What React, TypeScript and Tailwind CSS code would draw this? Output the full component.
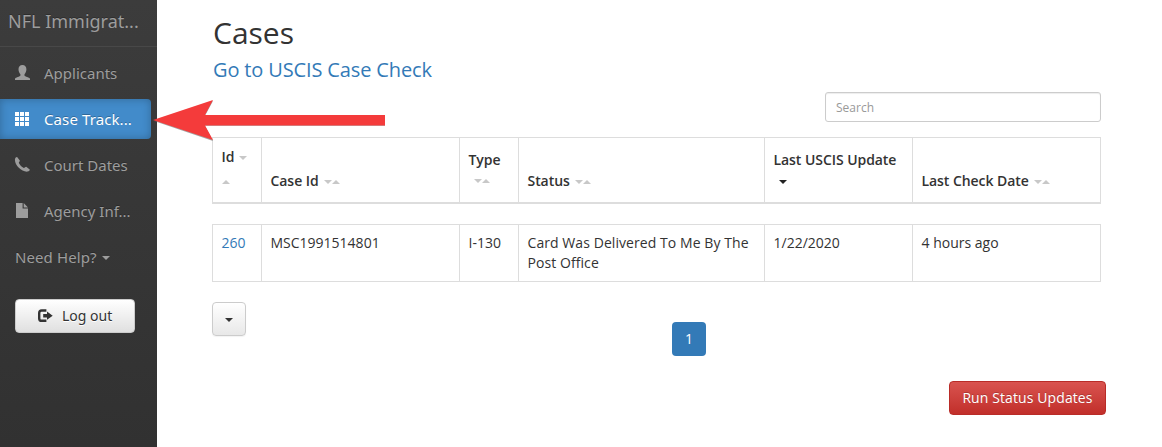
import type { ReactNode } from 'react';

const UserIcon = () => (
  <svg className="block h-[16px] w-[16px]" viewBox="0 0 16 16" fill="currentColor">
    <path d="M8.4 0C11 0 12.4 1.7 12.4 4.3C12.4 6.4 11.6 8.2 10.5 9.2V10.4C10.7 11.5 15.7 12.2 16 13.8V15H1V13.8C1.3 12.2 6.2 11.5 6.4 10.4V9.2C5.3 8.2 4.5 6.4 4.5 4.3C4.5 1.7 5.9 0 8.4 0Z" />
  </svg>
);

const GridIcon = () => (
  <svg className="block h-[16px] w-[16px]" viewBox="0 0 16 16" fill="currentColor">
    <path d="M1 1h4v4H1zM6 1h4v4H6zM11 1h4v4h-4zM1 6h4v4H1zM6 6h4v4H6zM11 6h4v4h-4zM1 11h4v4H1zM6 11h4v4H6zM11 11h4v4h-4z" />
  </svg>
);

const PhoneIcon = () => (
  <svg className="block h-[16px] w-[16px]" viewBox="0 0 16 16" fill="currentColor">
    <path d="M1 2C1.3 0.8 2.4 -0.2 3.1 0.1L5.8 3.6C6.2 4.3 4.6 5.3 4.9 6C5.9 8.1 7.7 10 9.8 10.9C10.5 11.2 11.6 9.5 12.2 9.8L15.7 12.4C16.1 13.1 14.9 14.4 13.6 14.6C10.5 14.9 7.3 13.3 4.8 10.8C2.2 8.1 0.6 4.9 1 2Z" />
  </svg>
);

const FileIcon = () => (
  <svg className="block h-[16px] w-[16px]" viewBox="0 0 16 16" fill="currentColor">
    <path d="M2 0H8.6V5.6H14V15H2ZM9.7 0L14 4.5H9.7Z" />
  </svg>
);

const LogOutIcon = () => (
  <svg className="block h-[16px] w-[16px]" viewBox="0 0 16 16">
    <path d="M9.4 2.5H4.6Q2.2 2.5 2.2 4.9V10.4Q2.2 12.8 4.6 12.8H9.4" fill="none" stroke="currentColor" strokeWidth="2.4" />
    <path d="M6.2 6H10V3.6L15.7 7.7L10 11.8V9.4H6.2Z" fill="currentColor" />
  </svg>
);

const Down = ({ className = 'text-[#c8c8c8]' }: { className?: string }) => (
  <svg className={`inline-block h-[4px] w-[8px] align-middle ${className}`} viewBox="0 0 8 4" fill="currentColor">
    <path d="M0 0H8L4 4Z" />
  </svg>
);

const Up = () => (
  <svg className="inline-block h-[4px] w-[8px] align-middle text-[#c8c8c8]" viewBox="0 0 8 4" fill="currentColor">
    <path d="M0 4H8L4 0Z" />
  </svg>
);

const Sort = () => (
  <span className="ml-[5px] flex h-[22px] items-center">
    <Down />
    <Up />
  </span>
);

function NavItem({ icon, label, active = false }: { icon: ReactNode; label: string; active?: boolean }) {
  return (
    <a
      className={
        active
          ? 'flex h-[40px] w-[151px] items-center rounded-r-[4px] bg-[#428bca] pl-[14px] text-white shadow-[inset_0_0_8px_rgba(0,0,0,0.25)]'
          : 'flex h-[40px] w-[151px] items-center pl-[14px]'
      }
    >
      {icon}
      <span className={active ? 'ml-[14px] whitespace-nowrap tracking-[0.1px]' : 'ml-[14px] whitespace-nowrap'}>{label}</span>
    </a>
  );
}

const cols = 'grid grid-cols-[49px_198px_59px_246px_148px_189px]';

export default function App() {
  return (
    <div className="relative flex h-[447px] w-[1162px] overflow-hidden bg-white font-['Open_Sans',sans-serif] text-[14px] leading-[20px] text-[#333]">
      <aside className="h-full w-[157px] shrink-0 bg-linear-to-b from-[#3c3c3c] to-[#313131] font-['Noto_Sans',sans-serif] text-[15px] text-[#9d9d9d] [text-shadow:0_-1px_0_rgba(0,0,0,0.25)]">
        <div className="flex h-[47px] items-center border-b border-[#484848] pb-[4px] pl-[8px] text-[18px]">
          <span>NFL Immigrat...</span>
        </div>
        <nav className="flex flex-col gap-[6px] pt-[6px]">
          <NavItem icon={<UserIcon />} label="Applicants" />
          <NavItem icon={<GridIcon />} label="Case Track..." active />
          <NavItem icon={<PhoneIcon />} label="Court Dates" />
          <NavItem icon={<FileIcon />} label="Agency Inf..." />
          <a className="flex h-[40px] items-center pl-[15px]">
            <span className="tracking-[0.1px]">Need Help?</span>
            <Down className="ml-[5px] mt-[2px] text-[#9d9d9d]" />
          </a>
        </nav>
        <button className="ml-[15px] mt-[22px] flex h-[34px] w-[120px] items-center rounded-[4px] border border-[#ccc] bg-linear-to-b from-white to-[#e0e0e0] pl-[21px] text-[14px] text-[#333] [text-shadow:0_1px_0_#fff]">
          <LogOutIcon />
          <span className="ml-[9px]">Log out</span>
        </button>
      </aside>

      <main className="ml-[55px] w-[894px]">
        <h1 className="pl-px pt-[16px] text-[30px] leading-[33px]">Cases</h1>
        <h2 className="mt-[9px] pl-px text-[20px] leading-[24px] tracking-[-0.14px] text-[#337ab7]">Go to USCIS Case Check</h2>
        <div className="mt-[10px] flex w-[889px] justify-end">
          <input
            placeholder="Search"
            className="h-[30px] w-[276px] rounded-[3px] border border-[#ccc] px-[10px] text-[12px] shadow-[inset_0_1px_1px_rgba(0,0,0,0.075)] placeholder:text-[#999]"
          />
        </div>

        <div className="mt-[15px] w-[889px]">
          <div className={`${cols} h-[67px] border-t border-b-2 border-r border-[#ddd] font-semibold tracking-[-0.06px] [&>div]:border-l [&>div]:border-[#ddd] [&>div]:pl-[8.5px]`}>
            <div className="pt-[9px]">
              <div className="flex items-center">
                Id
                <Down className="ml-[5px] mt-[1px] text-[#c8c8c8]" />
              </div>
              <div className="flex h-[30px] items-center">
                <Up />
              </div>
            </div>
            <div className="flex pt-[33px]">
              Case Id
              <Sort />
            </div>
            <div className="pt-[12px]">
              Type
              <Sort />
            </div>
            <div className="flex pt-[33px]">
              Status
              <Sort />
            </div>
            <div className="pt-[12px]">
              Last USCIS Update
              <div className="flex h-[23px] items-center pl-[5px]">
                <Down className="text-[#222]" />
              </div>
            </div>
            <div className="flex pt-[33px]">
              Last Check Date
              <Sort />
            </div>
          </div>
          <div className={`${cols} mt-[20px] h-[58px] border-y border-r border-[#ddd] [&>div]:border-l [&>div]:border-[#ddd] [&>div]:pl-[8.5px] [&>div]:pt-[8px]`}>
            <div className="text-[#337ab7]">260</div>
            <div>MSC1991514801</div>
            <div>I-130</div>
            <div className="tracking-[0.07px]">Card Was Delivered To Me By The Post Office</div>
            <div>1/22/2020</div>
            <div>4 hours ago</div>
          </div>
        </div>

        <div className="mt-[20px] flex w-[889px]">
          <button className="flex h-[34px] w-[34px] items-center justify-center rounded-[4px] border border-[#ccc] bg-linear-to-b from-white to-[#e8e8e8] shadow-[0_1px_1px_rgba(0,0,0,0.05)]">
            <Down className="mt-[2px] text-[#333]" />
          </button>
          <button className="ml-[426px] mt-[20px] h-[34px] w-[34px] rounded-[4px] bg-[#337ab7] text-white">1</button>
        </div>
        <div className="mt-[25px] flex justify-end">
          <button className="h-[34px] w-[157px] whitespace-nowrap rounded-[4px] border border-[#b92c28] bg-linear-to-b from-[#d9534f] to-[#c12e2a] tracking-[0.1px] text-white [text-shadow:0_-1px_0_rgba(0,0,0,0.2)]">
            Run Status Updates
          </button>
        </div>
      </main>

      <svg className="absolute left-[150px] top-[96px] h-[50px] w-[240px]" viewBox="0 0 240 50">
        <path d="M4 25L63 5L55 19.7H235V29.7H55L63 45Z" fill="#666" opacity="0.6" />
        <path d="M3 24L63 4L55 19H235V29.4H55L63 44Z" fill="#f43b3b" />
      </svg>
    </div>
  );
}
